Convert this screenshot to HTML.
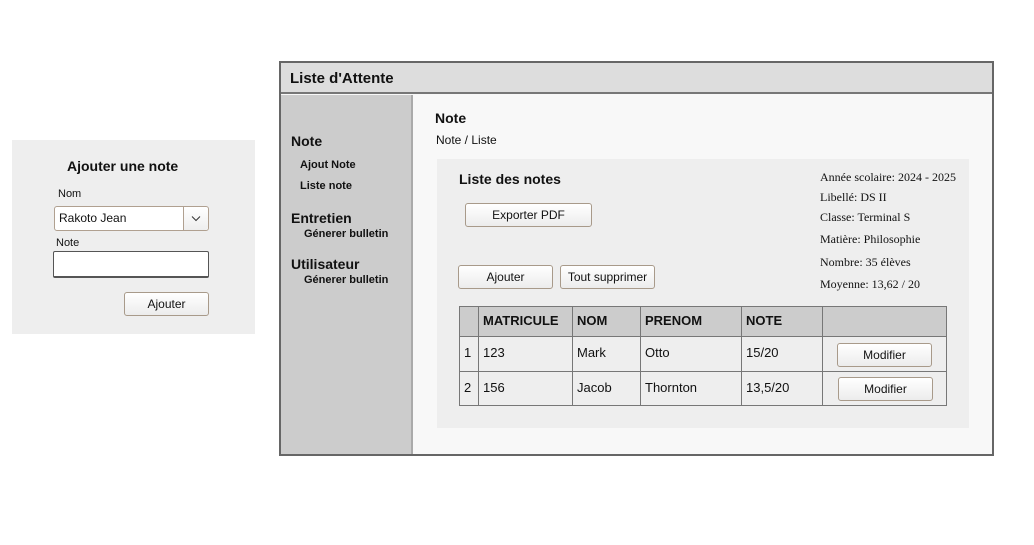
<!DOCTYPE html>
<html><head><meta charset="utf-8"><style>
*{box-sizing:border-box;margin:0;padding:0}
body{width:1034px;height:545px;background:#fff;position:relative;font-family:"Liberation Sans",sans-serif;color:#111;overflow:hidden}
.a{position:absolute;white-space:nowrap}
.btn{position:absolute;border:1px solid #a89a8a;border-radius:3px;background:linear-gradient(#fff,#ececec);font-size:12px;text-align:center;color:#111}
.s{font-family:"Liberation Serif",serif;font-size:12px}
.b{font-weight:bold}
.vl{position:absolute;width:1px;background:#777}
.hl{position:absolute;height:1px;background:#777}
</style></head><body>
<div class="a" style="left:12px;top:140px;width:243px;height:194px;background:#eee"></div>
<div class="a b" style="left:67px;top:158px;font-size:14px">Ajouter une note</div>
<div class="a" style="left:58px;top:188px;font-size:11px">Nom</div>
<div class="a" style="left:54px;top:206px;width:155px;height:25px;border:1px solid #b0a090;border-radius:3px;background:#fff"></div>
<div class="a" style="left:183px;top:207px;width:25px;height:23px;border-left:1px solid #b0a090;background:linear-gradient(#fff,#eee);border-radius:0 3px 3px 0"></div>
<svg class="a" style="left:191px;top:215px" width="10" height="7"><path d="M1 1.5L5 5.5L9 1.5" stroke="#333" fill="none"/></svg>
<div class="a" style="left:59px;top:211px;font-size:12px">Rakoto Jean</div>
<div class="a" style="left:56px;top:237px;font-size:11px">Note</div>
<div class="a" style="left:53px;top:251px;width:156px;height:27px;border:1px solid #555;border-bottom-width:2px;border-radius:2px;background:#fff"></div>
<div class="btn" style="left:124px;top:292px;width:85px;height:24px;line-height:22px">Ajouter</div>
<div class="a" style="left:279px;top:61px;width:715px;height:395px;border:2px solid #666;background:#f8f8f8"></div>
<div class="a" style="left:281px;top:63px;width:711px;height:31px;background:#ddd;border-bottom:2px solid #777"></div>
<div class="a b" style="left:290px;top:70px;font-size:15px">Liste d'Attente</div>
<div class="a" style="left:281px;top:95px;width:132px;height:359px;background:#ccc;border-right:2px solid #aaa"></div>
<div class="a b" style="left:291px;top:133px;font-size:14px">Note</div>
<div class="a b" style="left:300px;top:159px;font-size:11px">Ajout Note</div>
<div class="a b" style="left:300px;top:180px;font-size:11px">Liste note</div>
<div class="a b" style="left:291px;top:210px;font-size:14px">Entretien</div>
<div class="a b" style="left:304px;top:228px;font-size:11px">Génerer bulletin</div>
<div class="a b" style="left:291px;top:256px;font-size:14px">Utilisateur</div>
<div class="a b" style="left:304px;top:274px;font-size:11px">Génerer bulletin</div>
<div class="a b" style="left:435px;top:110px;font-size:14px">Note</div>
<div class="a" style="left:436px;top:133px;font-size:12px">Note / Liste</div>
<div class="a" style="left:437px;top:159px;width:532px;height:269px;background:#eee"></div>
<div class="a b" style="left:459px;top:171px;font-size:14px">Liste des notes</div>
<div class="btn" style="left:465px;top:203px;width:127px;height:24px;line-height:22px">Exporter PDF</div>
<div class="btn" style="left:458px;top:265px;width:95px;height:24px;line-height:22px">Ajouter</div>
<div class="btn" style="left:560px;top:265px;width:95px;height:24px;line-height:22px">Tout supprimer</div>
<div class="a s" style="left:820px;top:170px">Année scolaire: 2024 - 2025</div>
<div class="a s" style="left:820px;top:190px">Libellé: DS II</div>
<div class="a s" style="left:820px;top:210px">Classe: Terminal S</div>
<div class="a s" style="left:820px;top:232px">Matière: Philosophie</div>
<div class="a s" style="left:820px;top:255px">Nombre: 35 élèves</div>
<div class="a s" style="left:820px;top:277px">Moyenne: 13,62 / 20</div>
<div class="a" style="left:459px;top:306px;width:488px;height:100px;border:1px solid #777;background:#eee"></div>
<div class="a" style="left:460px;top:307px;width:486px;height:29px;background:#ccc"></div>
<div class="hl" style="left:459px;top:336px;width:488px"></div>
<div class="hl" style="left:459px;top:371px;width:488px"></div>
<div class="vl" style="left:478px;top:306px;height:100px"></div>
<div class="vl" style="left:572px;top:306px;height:100px"></div>
<div class="vl" style="left:640px;top:306px;height:100px"></div>
<div class="vl" style="left:741px;top:306px;height:100px"></div>
<div class="vl" style="left:822px;top:306px;height:100px"></div>
<div class="a b" style="left:483px;top:313px;font-size:13px">MATRICULE</div>
<div class="a b" style="left:577px;top:313px;font-size:13px">NOM</div>
<div class="a b" style="left:645px;top:313px;font-size:13px">PRENOM</div>
<div class="a b" style="left:746px;top:313px;font-size:13px">NOTE</div>
<div class="a" style="left:464px;top:345px;font-size:13px">1</div>
<div class="a" style="left:483px;top:345px;font-size:13px">123</div>
<div class="a" style="left:577px;top:345px;font-size:13px">Mark</div>
<div class="a" style="left:645px;top:345px;font-size:13px">Otto</div>
<div class="a" style="left:746px;top:345px;font-size:13px">15/20</div>
<div class="a" style="left:464px;top:380px;font-size:13px">2</div>
<div class="a" style="left:483px;top:380px;font-size:13px">156</div>
<div class="a" style="left:577px;top:380px;font-size:13px">Jacob</div>
<div class="a" style="left:645px;top:380px;font-size:13px">Thornton</div>
<div class="a" style="left:746px;top:380px;font-size:13px">13,5/20</div>
<div class="btn" style="left:837px;top:343px;width:95px;height:24px;line-height:22px">Modifier</div>
<div class="btn" style="left:838px;top:377px;width:95px;height:24px;line-height:22px">Modifier</div>
</body></html>
